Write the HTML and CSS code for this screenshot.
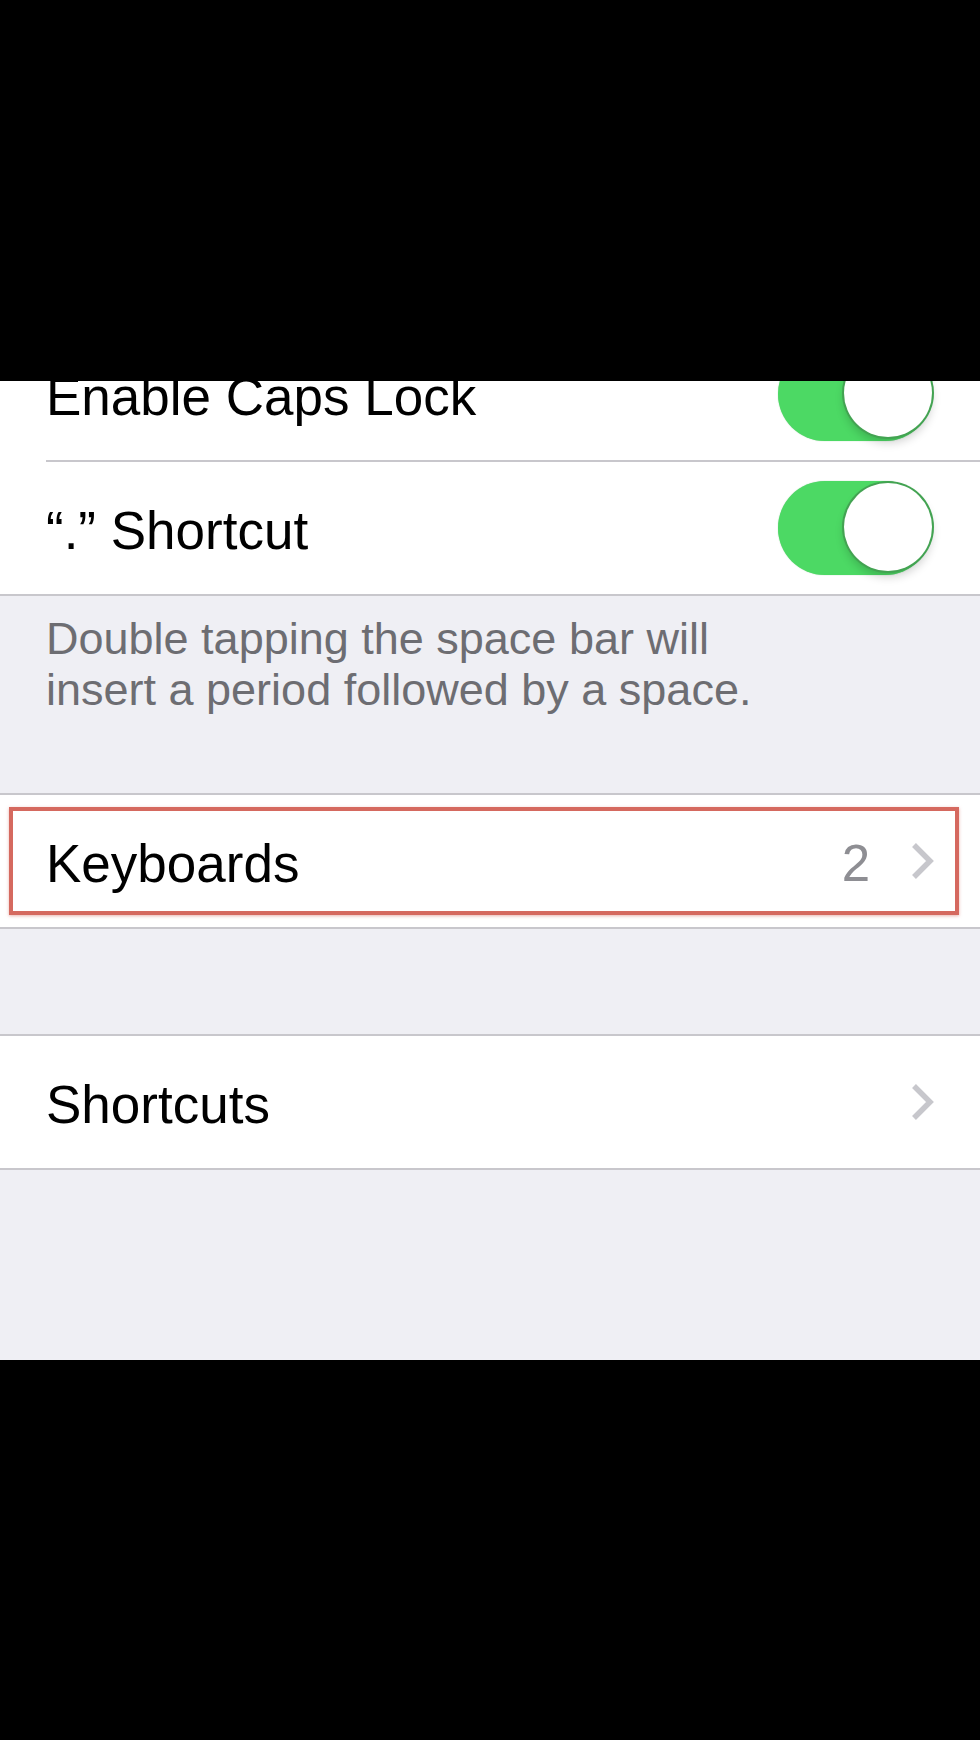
FILE: index.html
```html
<!DOCTYPE html>
<html>
<head>
<meta charset="utf-8">
<link rel="stylesheet" href="styles.css">
</head>
<body>
<div class="top-band"></div>
<div class="screen">
  <div class="group group-first">
    <div class="row">
      <span class="label">Enable Caps Lock</span>
      <span class="toggle"><span class="knob"></span></span>
    </div>
    <div class="row">
      <span class="label">“.” Shortcut</span>
      <span class="toggle"><span class="knob"></span></span>
    </div>
  </div>
  <div class="footer">Double tapping the space bar will<br>insert a period followed by a space.</div>
  <div class="group">
    <div class="row highlighted">
      <span class="label">Keyboards</span>
      <span class="detail">2</span>
      <svg class="chevron" width="26" height="40" viewBox="0 0 26 40"><polyline points="4,4 20,20 4,36" fill="none" stroke="#c7c7cc" stroke-width="5.5" stroke-linecap="butt" stroke-linejoin="miter"/></svg>
      <span class="annotation"></span>
    </div>
  </div>
  <div class="spacer"></div>
  <div class="group">
    <div class="row">
      <span class="label">Shortcuts</span>
      <svg class="chevron" width="26" height="40" viewBox="0 0 26 40"><polyline points="4,4 20,20 4,36" fill="none" stroke="#c7c7cc" stroke-width="5.5" stroke-linecap="butt" stroke-linejoin="miter"/></svg>
    </div>
  </div>
</div>
<div class="bottom-band"></div>
</body>
</html>
```

FILE: styles.css
```css
html, body {
  margin: 0;
  padding: 0;
  background: #000;
}
body {
  width: 980px;
  height: 1740px;
  overflow: hidden;
  font-family: "Liberation Sans", Arial, sans-serif;
}
.top-band {
  height: 381px;
  background: #000;
}
.screen {
  height: 979px;
  background: #efeff4;
  overflow: hidden;
}
.group {
  background: #fff;
  border-top: 2px solid #c8c7cc;
  border-bottom: 2px solid #c8c7cc;
}
.group-first {
  margin-top: -55px;
}
.row {
  position: relative;
  height: 132px;
  margin-left: 46px;
  padding-right: 46px;
  display: flex;
  align-items: center;
}
.row + .row {
  border-top: 2px solid #c8c7cc;
}
.label {
  flex: 1;
  font-size: 53px;
  color: #000;
  white-space: nowrap;
  padding-top: 4px;
}
.detail {
  font-size: 51px;
  color: #8e8e93;
  margin-right: 40px;
  padding-top: 4px;
}
.chevron {
  display: block;
  margin-right: -2px;
}
.toggle {
  position: relative;
  width: 154px;
  height: 94px;
  border-radius: 47px;
  background: #4cd964;
  box-shadow: 0 0 1px rgba(40, 160, 60, 0.6);
  margin-right: 2px;
}
.knob {
  position: absolute;
  right: 0;
  top: 2px;
  width: 88px;
  height: 88px;
  border-radius: 50%;
  background: #fff;
  box-shadow: 0 0 0 2px #43a352, 0 6px 10px rgba(0, 0, 0, 0.18);
}
.footer {
  padding: 17px 46px 78px 46px;
  font-size: 45px;
  line-height: 51px;
  color: #6d6d72;
  white-space: nowrap;
}
.annotation {
  position: absolute;
  left: -37px;
  top: 12px;
  width: 942px;
  height: 100px;
  border: 4px solid #d5695f;
  box-shadow: 0 1px 3px rgba(213, 105, 95, 0.5);
  pointer-events: none;
}
.spacer {
  height: 105px;
}
.bottom-band {
  height: 380px;
  background: #000;
}
```
